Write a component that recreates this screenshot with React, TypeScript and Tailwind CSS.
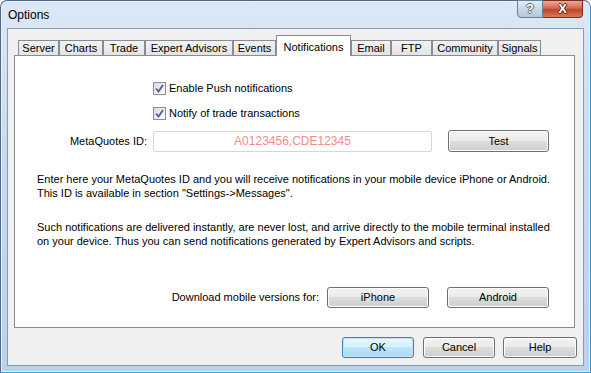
import React from "react";

const font = { fontFamily: '"Liberation Sans", Arial, sans-serif' };

const tabs = [
  { label: "Server", w: "w-[41px]" },
  { label: "Charts", w: "w-[44px]" },
  { label: "Trade", w: "w-[42px]" },
  { label: "Expert Advisors", w: "w-[88px]" },
  { label: "Events", w: "w-[43px]" },
  { label: "Notifications", w: "w-[75px]", active: true },
  { label: "Email", w: "w-[40px]" },
  { label: "FTP", w: "w-[41px]" },
  { label: "Community", w: "w-[66px]" },
  { label: "Signals", w: "w-[43px]" },
];

function Checkbox() {
  return (
    <span className="flex h-[13px] w-[13px] items-center justify-center border border-[#8f8f8f] bg-gradient-to-br from-[#dcdcdc] to-[#fbfbfb]">
      <svg width="9" height="9" viewBox="0 0 9 9">
        <path d="M1 4.5 L3.5 7.5 L8 1" fill="none" stroke="#4a5f97" strokeWidth="1.8" />
      </svg>
    </span>
  );
}

function Button({ children, w, def }: { children: React.ReactNode; w: string; def?: boolean }) {
  return (
    <button
      className={`${w} flex items-center justify-center rounded-[3px] border text-[11px] text-black ${
        def
          ? "border-[#3c7fb1] bg-[linear-gradient(#eaf6fd_0%,#d9f0fc_49%,#bee6fd_50%,#a7d9f5_100%)] shadow-[inset_0_0_0_1px_#c4e5f6]"
          : "border-[#707070] bg-[linear-gradient(#f2f2f2_0%,#ebebeb_49%,#dddddd_50%,#cfcfcf_100%)] shadow-[inset_0_0_0_1px_#fcfcfc]"
      }`}
    >
      {children}
    </button>
  );
}

export default function App() {
  return (
    <div style={font} className="h-[373px] w-[591px] overflow-hidden bg-white">
      <div className="flex h-[373px] w-[591px] flex-col rounded-t-[7px] border border-[#4f6b85] border-b-[#2fa4d8] border-r-[#3a8fc0] bg-[linear-gradient(#dce8f5_0%,#c7dbf0_40%,#b9d1ea_100%)] shadow-[inset_0_0_0_1px_#e9f2fb]">
        {/* title bar */}
        <div className="relative flex h-[27px] items-center pl-[7px]">
          <span className="text-[12px] text-black">Options</span>
          <div className="absolute right-[7px] top-[-1px] flex">
            <div className="flex h-[18px] w-[26px] items-center justify-center rounded-bl-[4px] border border-[#6b7f94] bg-[linear-gradient(#e4edf7_0%,#c9d8e8_50%,#b3c6db_100%)] text-[13px] font-bold text-white [text-shadow:1px_0_0_#56687c,-1px_0_0_#56687c,0_1px_0_#56687c,0_-1px_0_#56687c]">
              ?
            </div>
            <div className="flex h-[18px] w-[40px] items-center justify-center rounded-br-[4px] border border-l-0 border-[#7a2c1f] bg-[linear-gradient(#e9a99a_0%,#d4694f_45%,#c0432a_55%,#d97a5a_100%)] text-[13px] font-bold text-white [text-shadow:1px_0_0_#6a2418,-1px_0_0_#6a2418,0_1px_0_#6a2418,0_-1px_0_#6a2418]">
              X
            </div>
          </div>
        </div>

        {/* client area */}
        <div className="ml-[6px] mr-[6px] h-[338px] border border-[#8a9bb0] bg-[#f0f0f0]">
          <div className="ml-[6px] mt-[5px] w-[561px]">
            <div className="flex h-[21px] items-end pl-[4px]">
              {tabs.map((t) =>
                t.active ? (
                  <div
                    key={t.label}
                    className={`${t.w} relative z-10 -mb-px flex h-[21px] justify-center border border-b-0 border-[#898c95] bg-white pt-[3px] text-[11px] text-black`}
                  >
                    {t.label}
                  </div>
                ) : (
                  <div
                    key={t.label}
                    className={`${t.w} flex h-[15px] items-center justify-center border border-b-0 border-[#898c95] bg-[linear-gradient(#f3f3f3,#e3e3e3)] text-[11px] text-black`}
                  >
                    {t.label}
                  </div>
                )
              )}
            </div>
            <div className="relative h-[273px] border border-[#898c95] bg-white text-[11px] text-black">
              <div className="flex flex-col pl-[138px] pt-[26px]">
                <div className="flex h-[13px] items-center gap-[3px]">
                  <Checkbox />
                  <span>Enable Push notifications</span>
                </div>
                <div className="mt-[12px] flex h-[13px] items-center gap-[3px]">
                  <Checkbox />
                  <span>Notify of trade transactions</span>
                </div>
              </div>
              <div className="mt-[10px] flex items-center">
                <span className="w-[132px] text-right">MetaQuotes ID:</span>
                <div className="ml-[6px] flex h-[21px] w-[279px] items-center justify-center rounded-[2px] border border-[#d6d6d6] text-[12px] text-[#f58a8a]">
                  A0123456,CDE12345
                </div>
                <div className="ml-[16px] flex h-[22px]">
                  <Button w="w-[101px]">Test</Button>
                </div>
              </div>
              <div className="mt-[20px] pl-[22px] leading-[14px]">
                <p>
                  Enter here your MetaQuotes ID and you will receive notifications in your mobile device iPhone or Android.
                  <br />
                  This ID is available in section "Settings-&gt;Messages".
                </p>
                <p className="mt-[20px]">
                  Such notifications are delivered instantly, are never lost, and arrive directly to the mobile terminal installed
                  <br />
                  on your device. Thus you can send notifications generated by Expert Advisors and scripts.
                </p>
              </div>
              <div className="mt-[39px] flex h-[21px] items-center">
                <span className="w-[304px] text-right">Download mobile versions for:</span>
                <div className="ml-[8px] flex h-[21px]">
                  <Button w="w-[102px]">iPhone</Button>
                </div>
                <div className="ml-[18px] flex h-[21px]">
                  <Button w="w-[102px]">Android</Button>
                </div>
              </div>
            </div>
            <div className="-mr-[2px] mt-[9px] flex h-[21px] justify-end">
              <Button w="w-[72px]" def>
                OK
              </Button>
              <div className="ml-[9px] flex">
                <Button w="w-[72px]">Cancel</Button>
              </div>
              <div className="ml-[8px] flex">
                <Button w="w-[74px]">Help</Button>
              </div>
            </div>
          </div>
        </div>
        <div className="flex-1" />
      </div>
    </div>
  );
}
